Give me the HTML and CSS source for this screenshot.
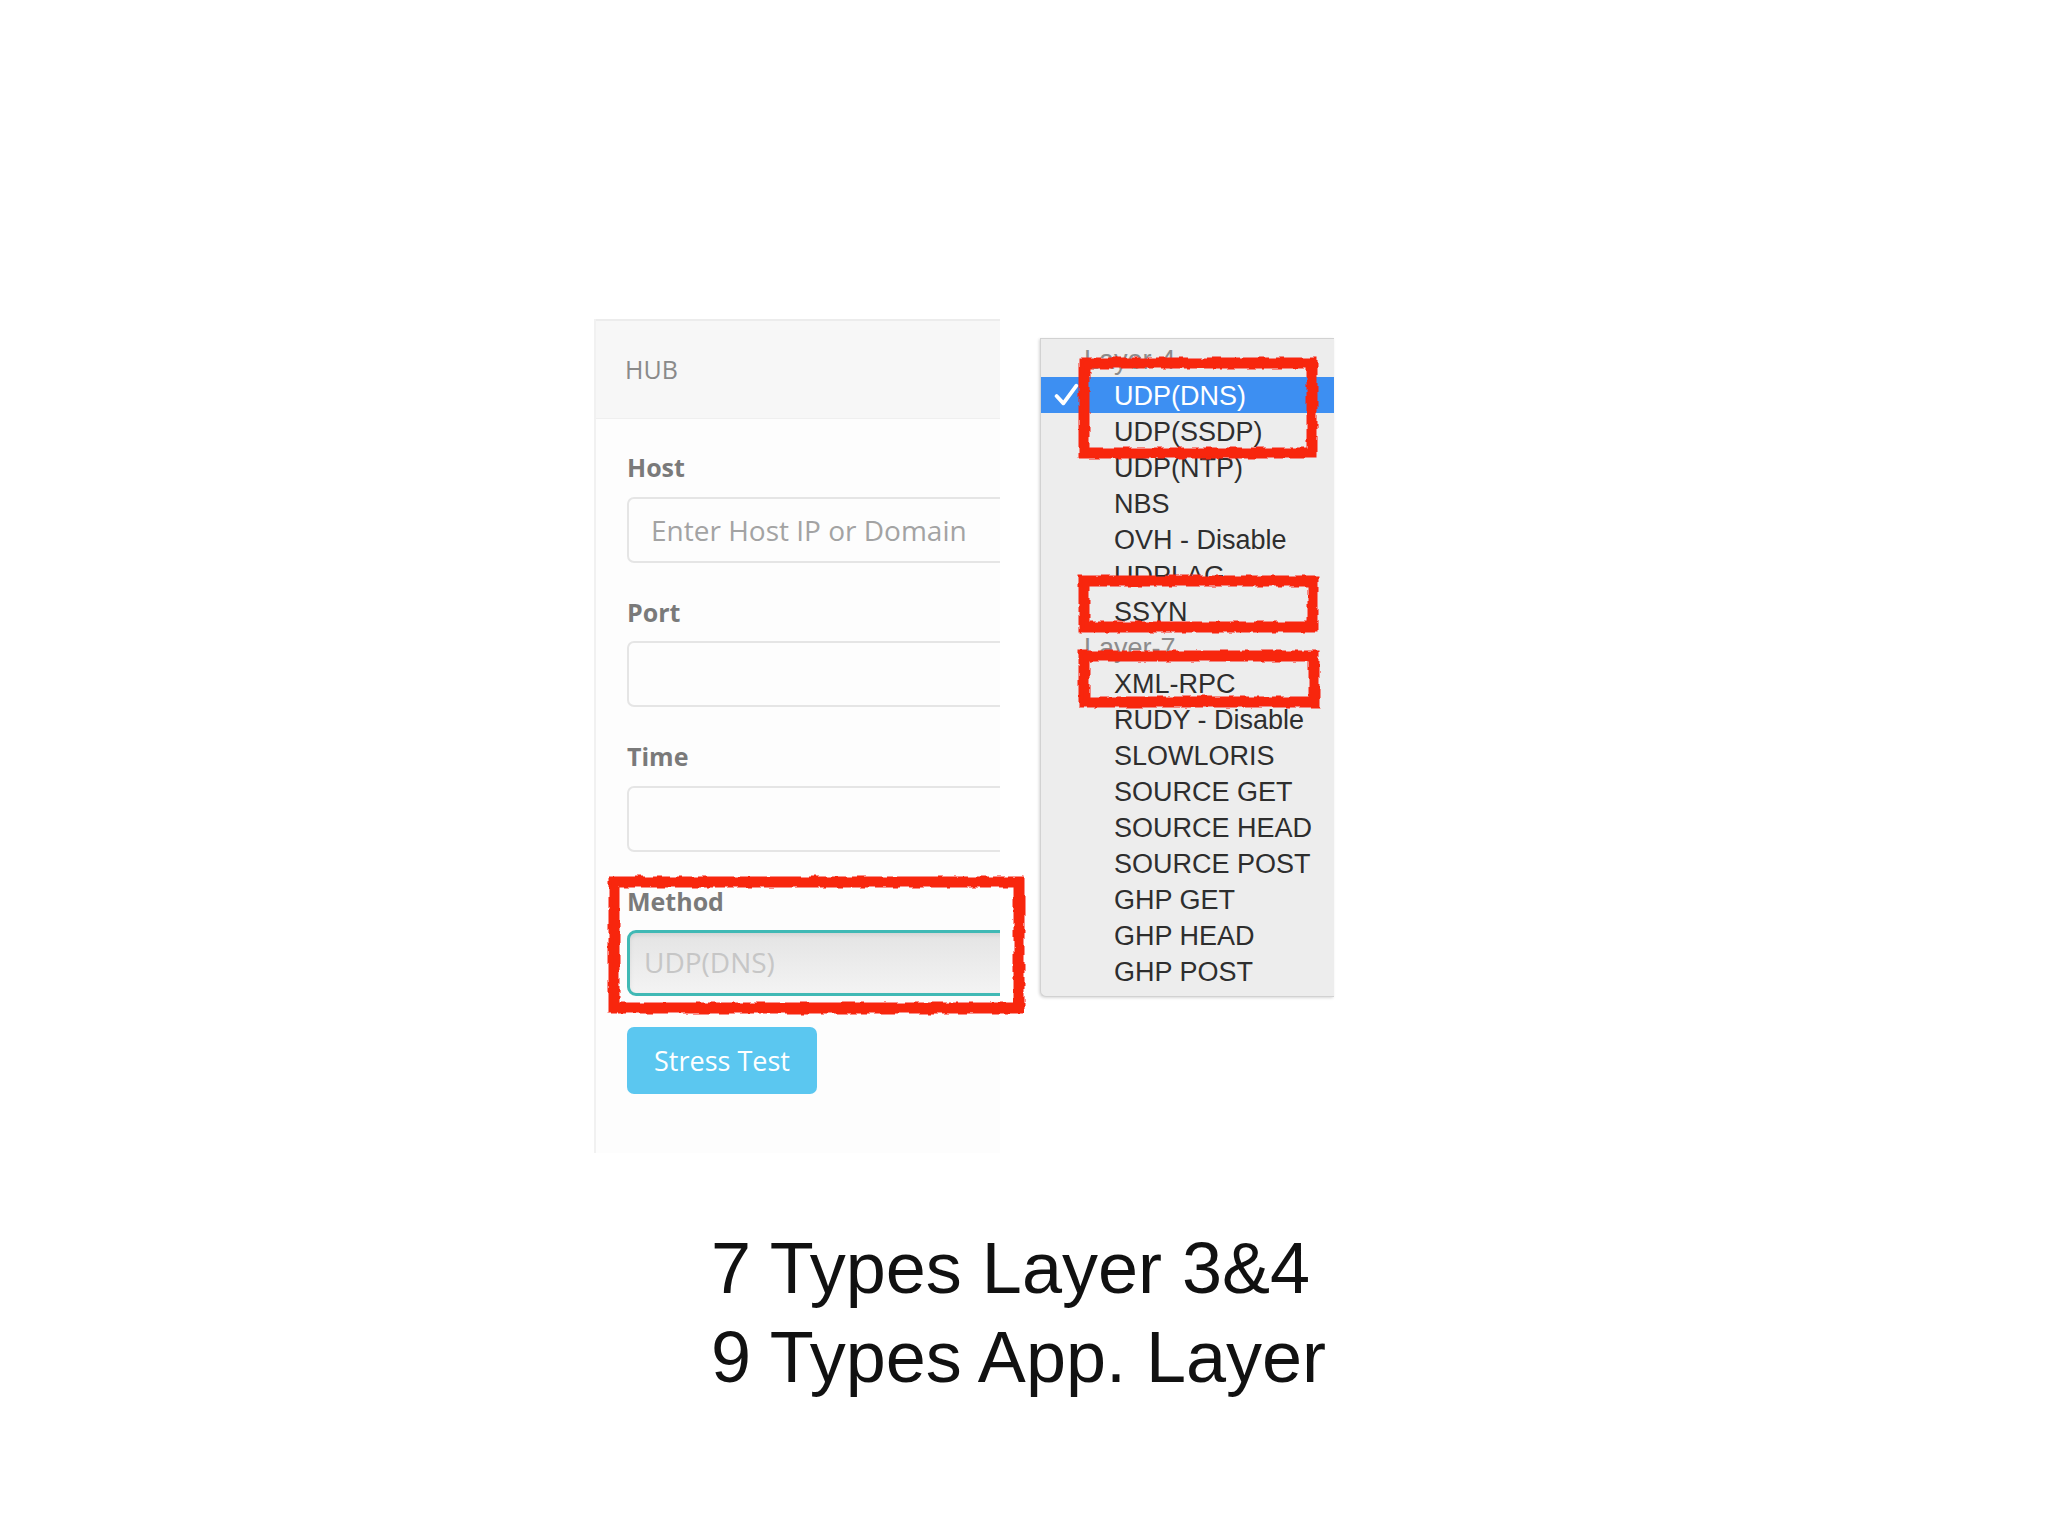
FILE: index.html
```html
<!DOCTYPE html>
<html>
<head>
<meta charset="utf-8">
<link rel="stylesheet" href="styles.css">
</head>
<body>
<div class="slide">
  <div class="stage">
    <div class="panel">
      <div class="panel-head">HUB</div>
      <div class="panel-body">
        <div class="group">
          <div class="label">Host</div>
          <input class="field" type="text" placeholder="Enter Host IP or Domain">
        </div>
        <div class="group">
          <div class="label">Port</div>
          <input class="field" type="text">
        </div>
        <div class="group">
          <div class="label">Time</div>
          <input class="field" type="text">
        </div>
        <div class="group">
          <div class="label">Method</div>
          <div class="select">UDP(DNS)</div>
        </div>
        <div class="btn">Stress Test</div>
      </div>
    </div>
    <div class="dropdown">
      <div class="dd-row dd-head">Layer-4</div>
      <div class="dd-row dd-selected">
        <svg class="check" viewBox="0 0 24 22" width="25" height="23"><path d="M2.5 12.5 L9 19.5 L21.5 2.5" fill="none" stroke="#ffffff" stroke-width="3.6" stroke-linecap="round" stroke-linejoin="round"/></svg>
        UDP(DNS)
      </div>
      <div class="dd-row">UDP(SSDP)</div>
      <div class="dd-row">UDP(NTP)</div>
      <div class="dd-row">NBS</div>
      <div class="dd-row">OVH - Disable</div>
      <div class="dd-row">UDPLAG</div>
      <div class="dd-row">SSYN</div>
      <div class="dd-row dd-head">Layer-7</div>
      <div class="dd-row">XML-RPC</div>
      <div class="dd-row">RUDY - Disable</div>
      <div class="dd-row">SLOWLORIS</div>
      <div class="dd-row">SOURCE GET</div>
      <div class="dd-row">SOURCE HEAD</div>
      <div class="dd-row">SOURCE POST</div>
      <div class="dd-row">GHP GET</div>
      <div class="dd-row">GHP HEAD</div>
      <div class="dd-row">GHP POST</div>
    </div>
  </div>
  <div class="caption">7 Types Layer 3&amp;4<br>9 Types App. Layer</div>
</div>
<svg class="marks" width="2048" height="1536" viewBox="0 0 2048 1536">
  <defs>
    <filter id="rough" x="-5%" y="-5%" width="110%" height="110%">
      <feTurbulence type="fractalNoise" baseFrequency="0.09" numOctaves="2" seed="4" result="n"/>
      <feDisplacementMap in="SourceGraphic" in2="n" scale="5"/>
    </filter>
  </defs>
  <g fill="none" stroke="#f8260e" filter="url(#rough)">
    <rect x="614" y="882" width="405" height="126" stroke-width="11"/>
    <rect x="611" y="879" width="410" height="131" stroke-width="3" opacity=".7"/>
    <rect x="1084" y="363" width="228" height="90" stroke-width="11"/>
    <rect x="1082" y="360" width="232" height="95" stroke-width="3" opacity=".7"/>
    <rect x="1084" y="581" width="229" height="46" stroke-width="11"/>
    <rect x="1082" y="578" width="233" height="51" stroke-width="3" opacity=".7"/>
    <rect x="1084" y="656" width="230" height="46" stroke-width="11"/>
    <rect x="1082" y="653" width="234" height="51" stroke-width="3" opacity=".7"/>
  </g>
</svg>
</body>
</html>
```
FILE: styles.css
```css
html, body {
  margin: 0;
  padding: 0;
  background: #ffffff;
}
body {
  width: 2048px;
  height: 1536px;
  position: relative;
  overflow: hidden;
  font-family: "Open Sans", "Liberation Sans", sans-serif;
}
.slide {
  padding-top: 319px;
}
.stage {
  display: flex;
  align-items: flex-start;
  margin-left: 594px;
}
.panel {
  width: 406px;
  flex: none;
  overflow: hidden;
  box-sizing: border-box;
  border-left: 2px solid #f1f1f1;
  background: #fdfdfd;
}
.panel-head {
  height: 97px;
  border-top: 2px solid #ececec;
  border-bottom: 1px solid #efefef;
  background: #f7f7f7;
  padding-left: 29px;
  font-size: 25px;
  line-height: 97px;
  color: #8a8a8a;
}
.panel-body {
  padding: 30px 0 59px 31px;
}
.group {
  margin-bottom: 31px;
}
.label {
  font-size: 25px;
  font-weight: 700;
  line-height: 37.5px;
  color: #7a7a7a;
  margin-bottom: 10px;
}
.field {
  display: block;
  box-sizing: border-box;
  width: 520px;
  height: 66px;
  margin: 0;
  border: 2px solid #e5e5e5;
  border-radius: 7px;
  background: #fdfdfd;
  padding: 0 0 0 22px;
  font-family: "Open Sans", sans-serif;
  font-size: 28px;
  color: #555;
  outline: none;
}
.field::placeholder {
  color: #a3a3a3;
}
.select {
  box-sizing: border-box;
  width: 520px;
  height: 66px;
  border: 3px solid #40b9b5;
  border-radius: 9px;
  background: linear-gradient(#e4e4e4, #f3f3f3);
  box-shadow: inset 0 2px 4px rgba(0, 0, 0, 0.08);
  padding-left: 14px;
  font-size: 28px;
  line-height: 58px;
  color: #c6c6c6;
}
.btn {
  width: 190px;
  height: 67px;
  border-radius: 7px;
  background: #5bc7f0;
  color: #ffffff;
  font-size: 27px;
  line-height: 67px;
  text-align: center;
}
.dropdown {
  flex: none;
  margin-left: 40px;
  margin-top: 19px;
  width: 293px;
  padding: 2px 0 7px;
  background: #ededed;
  border: 1px solid #d2d2d2;
  border-right: none;
  border-bottom-left-radius: 6px;
  box-shadow: -1px 1px 3px rgba(0, 0, 0, 0.16);
  font-family: "Liberation Sans", Arial, sans-serif;
  font-size: 27px;
  color: #2e2e2e;
}
.dd-row {
  position: relative;
  box-sizing: border-box;
  height: 36px;
  padding-top: 2px;
  line-height: 34px;
  padding-left: 73px;
  white-space: nowrap;
}
.dd-head {
  padding-left: 43px;
  color: #8c8c8c;
}
.dd-selected {
  background: #3d8ff2;
  color: #ffffff;
}
.check {
  position: absolute;
  left: 13px;
  top: 6px;
}
.caption {
  margin: 71px 0 0 711px;
  font-family: "Liberation Sans", Arial, sans-serif;
  font-size: 72px;
  line-height: 89px;
  color: #111111;
}
.marks {
  position: absolute;
  left: 0;
  top: 0;
  pointer-events: none;
}
```
